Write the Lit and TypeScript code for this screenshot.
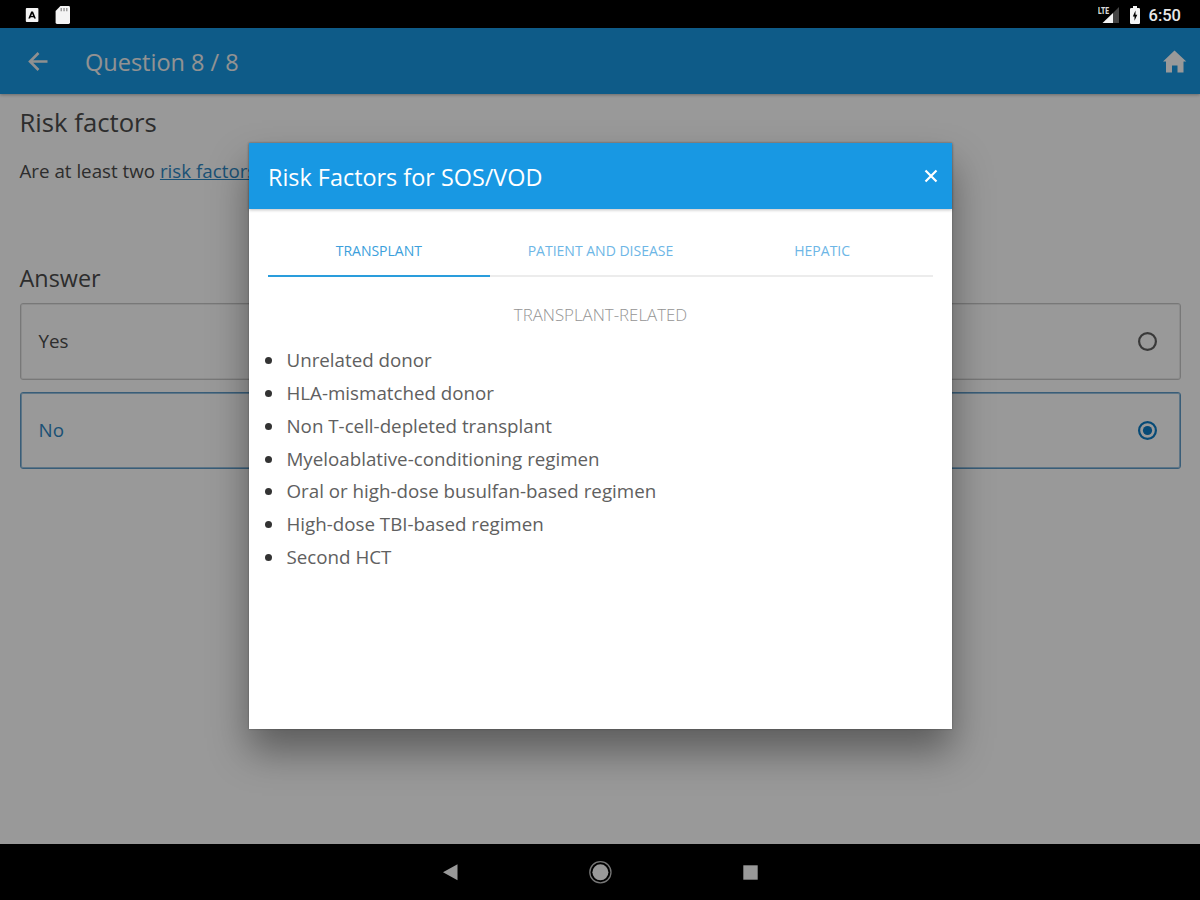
import {css, html, LitElement, svg} from 'lit';
import {customElement, property, state} from 'lit/decorators.js';
import {classMap} from 'lit/directives/class-map.js';

interface RiskTab {
  id: string;
  label: string;
  heading: string;
  items: string[];
}

const TABS: RiskTab[] = [
  {
    id: 'transplant',
    label: 'Transplant',
    heading: 'Transplant-related',
    items: [
      'Unrelated donor',
      'HLA-mismatched donor',
      'Non T-cell-depleted transplant',
      'Myeloablative-conditioning regimen',
      'Oral or high-dose busulfan-based regimen',
      'High-dose TBI-based regimen',
      'Second HCT',
    ],
  },
  {id: 'patient', label: 'Patient and disease', heading: 'Patient and disease-related', items: []},
  {id: 'hepatic', label: 'Hepatic', heading: 'Hepatic-related', items: []},
];

/**
 * Android status bar: notifications on the left, signal, battery and clock on the right.
 *
 * @customElement status-bar
 */
@customElement('status-bar')
export class StatusBar extends LitElement {
  static styles = css`
    :host {
      display: flex;
      align-items: center;
      box-sizing: border-box;
      height: 28px;
      padding: 1px 19px 0 24px;
      background: #000;
      color: #e8e8e8;
      font: 500 16.5px/28px Roboto, sans-serif;
    }

    svg {
      display: block;
      fill: #f4f4f4;
    }

    .keyboard {
      margin-right: 14px;
    }

    .signal {
      margin-left: auto;
      margin-right: 9px;
    }

    .battery {
      margin-right: 8px;
    }

    .time {
      margin-top: 2px;
    }

    .lte {
      fill: #d8d8d8;
      font: 900 9px Roboto, sans-serif;
    }
  `;

  render() {
    return html`
      <svg class="keyboard" width="16" height="18" viewBox="0 0 16 18">
        <path fill-rule="evenodd" d="M2.8 2h10.6q1 0 1 1v12q0 1-1 1H2.8q-1 0-1-1V3q0-1 1-1zM7.2 5.5 4.3 12.6h1.8l.5-1.4h3l.5 1.4h1.8L9 5.5zM8.1 7.5l.9 2.4H7.2z"/>
      </svg>
      <svg width="18" height="20" viewBox="0 0 18 20">
        <path d="M6.4 1h8.2q1.4 0 1.4 1.4v15.2q0 1.4-1.4 1.4H3q-1.4 0-1.4-1.4V6z"/>
        <path fill="#999" d="M6.5 3H8v3.2H6.5zM9.3 3h1.5v3.2H9.3zM12 3h1.5v3.2H12z"/>
      </svg>
      <svg class="signal" width="22" height="20" viewBox="0 0 22 20">
        <path fill="#444" d="M21 2v16h-6V8z"/>
        <path d="M4.5 18 15 8v10z"/>
        <text class="lte" x="0" y="8.5" textLength="11" lengthAdjust="spacingAndGlyphs">LTE</text>
      </svg>
      <svg class="battery" width="12" height="20" viewBox="0 0 12 20">
        <path fill-rule="evenodd" d="M4 1h4v2h1.8Q11 3 11 4.2v13.6q0 1.2-1.2 1.2H2.2Q1 19 1 17.8V4.2Q1 3 2.2 3H4zM6.5 5.5 3.8 11.5h1.7v4.2L8.3 9.8H6.5z"/>
      </svg>
      <span class="time">6:50</span>
    `;
  }
}

/**
 * Android navigation bar with back, home and recents.
 *
 * @customElement nav-bar
 */
@customElement('nav-bar')
export class NavBar extends LitElement {
  static styles = css`
    :host {
      display: flex;
      justify-content: center;
      align-items: center;
      gap: 126px;
      box-sizing: border-box;
      height: 56px;
      background: #000;
    }

    svg {
      display: block;
      fill: #999;
    }
  `;

  render() {
    return html`
      <svg width="24" height="24" viewBox="0 0 24 24"><path d="M5 12.300 19.500 4.300v16z"/></svg>
      <svg width="24" height="24" viewBox="0 0 24 24">
        <circle cx="12.4" cy="12.3" r="8"/>
        <circle cx="12.4" cy="12.3" r="10.6" fill="none" stroke="#777" stroke-width="1.3"/>
      </svg>
      <svg width="24" height="24" viewBox="0 0 24 24"><path d="M5.3 5.3h14.4v14.4H5.3z"/></svg>
    `;
  }
}

/**
 * One selectable answer, outlined, with a radio mark at the end.
 *
 * @customElement answer-option
 */
@customElement('answer-option')
export class AnswerOption extends LitElement {
  @property() label = '';
  @property({type: Boolean, reflect: true}) checked = false;

  static styles = css`
    :host {
      display: flex;
      align-items: center;
      justify-content: space-between;
      box-sizing: border-box;
      height: 77px;
      padding: 0 23px 0 18px;
      border: 1px solid #c8c8c8;
      border-radius: 3px;
      box-shadow: inset 0 0 0 1px #ececec;
      color: #4c4c4c;
      font-size: 18.8px;
    }

    :host([checked]) {
      border-color: #5f9cc8;
      box-shadow: inset 0 0 0 1px #9cc3e0;
      color: #2e87c4;
    }

    .label {
      margin-top: -2px;
    }

    svg {
      display: block;
      fill: none;
      stroke: #606060;
      stroke-width: 2.2;
    }

    :host([checked]) svg {
      stroke: #0a7cc6;
    }

    .dot {
      fill: #0a7cc6;
      stroke: none;
    }
  `;

  render() {
    return html`
      <span class="label">${this.label}</span>
      <svg width="20" height="20" viewBox="0 0 20 20">
        <circle cx="10.5" cy="9.5" r="8.4"/>
        ${this.checked ? svg`<circle class="dot" cx="10.5" cy="9.5" r="4.6"/>` : ''}
      </svg>
    `;
  }
}

/**
 * Dialog listing the risk factors, split over tabs.
 *
 * @customElement risk-dialog
 */
@customElement('risk-dialog')
export class RiskDialog extends LitElement {
  @state() private selected = 'transplant';

  static styles = css`
    :host {
      display: flex;
      flex-direction: column;
      background: #fff;
      box-shadow: 0 22px 37px rgba(0, 0, 0, 0.4), 0 0 2px rgba(0, 0, 0, 0.3);
    }

    .header {
      display: flex;
      align-items: center;
      justify-content: space-between;
      box-sizing: border-box;
      height: 66px;
      padding: 1px 14px 0 19px;
      background: #1898e3;
      box-shadow: 0 1px 3px rgba(0, 0, 0, 0.25);
      color: #fff;
    }

    .title {
      font-size: 23.4px;
    }

    .close {
      display: block;
      margin-top: -1px;
      fill: none;
      stroke: #fff;
      stroke-width: 2.2;
    }

    .tabs {
      display: grid;
      grid-template-columns: repeat(3, 1fr);
      margin: 16px 19px 0;
    }

    .tab {
      height: 50px;
      border-bottom: 2px solid #ececec;
      color: #6db6e6;
      font-size: 14px;
      line-height: 51px;
      text-align: center;
      text-transform: uppercase;
      cursor: pointer;
    }

    .tab.active {
      border-color: #2a9ddc;
      color: #3c9fdc;
    }

    .heading {
      margin: 25px 0 0;
      color: #949494;
      font-size: 16.85px;
      font-weight: 300;
      line-height: 26px;
      text-align: center;
      text-transform: uppercase;
    }

    .list {
      margin: 15.4px 0 0;
      padding: 0;
      list-style: none;
    }

    .item {
      display: flex;
      align-items: center;
      height: 32.8px;
      padding-left: 16px;
      color: #606060;
      font-size: 18.75px;
    }

    .item::before {
      content: '';
      width: 7px;
      height: 7px;
      margin: 2px 14.5px 0 0;
      border-radius: 50%;
      background: #333;
    }
  `;

  render() {
    const current = TABS.find((tab) => tab.id === this.selected)!;
    return html`
      <div class="header">
        <span class="title">Risk Factors for SOS/VOD</span>
        <svg class="close" width="14" height="14" viewBox="0 0 14 14">
          <path d="m1.5 1.5 11 11m0-11-11 11"/>
        </svg>
      </div>
      <div class="tabs">
        ${TABS.map((tab) => html`
          <div
            class=${classMap({tab: true, active: tab.id === this.selected})}
            @click=${() => (this.selected = tab.id)}
          >${tab.label}</div>
        `)}
      </div>
      <h3 class="heading">${current.heading}</h3>
      <ul class="list">
        ${current.items.map((item) => html`<li class="item">${item}</li>`)}
      </ul>
    `;
  }
}

@customElement('app-root')
export class AppRoot extends LitElement {
  static styles = css`
    :host {
      display: flex;
      flex-direction: column;
      width: 1200px;
      height: 900px;
      overflow: hidden;
      background: #000;
      font-family: 'Open Sans', 'Noto Sans', sans-serif;
    }

    .screen {
      position: relative;
      flex: 1;
      background: #fff;
    }

    .toolbar {
      display: flex;
      align-items: center;
      box-sizing: border-box;
      height: 66px;
      padding: 1px 13px 0 27px;
      background: #1898e3;
      box-shadow: 0 1px 3px rgba(0, 0, 0, 0.3);
      color: #fff;
      font-size: 23.5px;
    }

    .toolbar svg {
      display: block;
    }

    .toolbar-title {
      margin-left: 36px;
      color: #f4f4f4;
    }

    .home {
      margin-left: auto;
    }

    .content {
      padding: 11px 19px 0 19.5px;
      color: #4c4c4c;
    }

    .section {
      margin: 0;
      font-size: 23.4px;
      font-weight: 400;
      line-height: 36px;
    }

    .section.large {
      font-size: 25.7px;
    }

    .question {
      margin: 18px 0 77px;
      font-size: 18.75px;
      line-height: 24px;
    }

    .link {
      color: #2e87c4;
      text-decoration: underline;
    }

    .answers {
      display: grid;
      gap: 12px;
      margin-top: 7px;
    }

    .backdrop {
      position: absolute;
      inset: 0;
      display: grid;
      padding: 115px 248px 115px 249px;
      background: rgba(0, 0, 0, 0.4);
    }
  `;

  render() {
    return html`
      <status-bar></status-bar>
      <div class="screen">
        <div class="toolbar">
          <svg width="22" height="22" viewBox="0 0 22 22" fill="none" stroke="#f0f0f0" stroke-width="2.6">
            <path d="M20.5 10.5H3M11.5 2 3 10.5l8.5 8.5"/>
          </svg>
          <span class="toolbar-title">Question 8 / 8</span>
          <svg class="home" width="24" height="24" viewBox="0 0 24 24">
            <path fill="#fff" d="M11.5.5 23.3 11.5h-2.8v11h-6v-7H9v7H3v-11H0z"/>
          </svg>
        </div>
        <div class="content">
          <h2 class="section large">Risk factors</h2>
          <p class="question">Are at least two <a class="link">risk factors</a></p>
          <h2 class="section">Answer</h2>
          <div class="answers">
            <answer-option label="Yes"></answer-option>
            <answer-option label="No" checked></answer-option>
          </div>
        </div>
        <div class="backdrop">
          <risk-dialog></risk-dialog>
        </div>
      </div>
      <nav-bar></nav-bar>
    `;
  }
}
